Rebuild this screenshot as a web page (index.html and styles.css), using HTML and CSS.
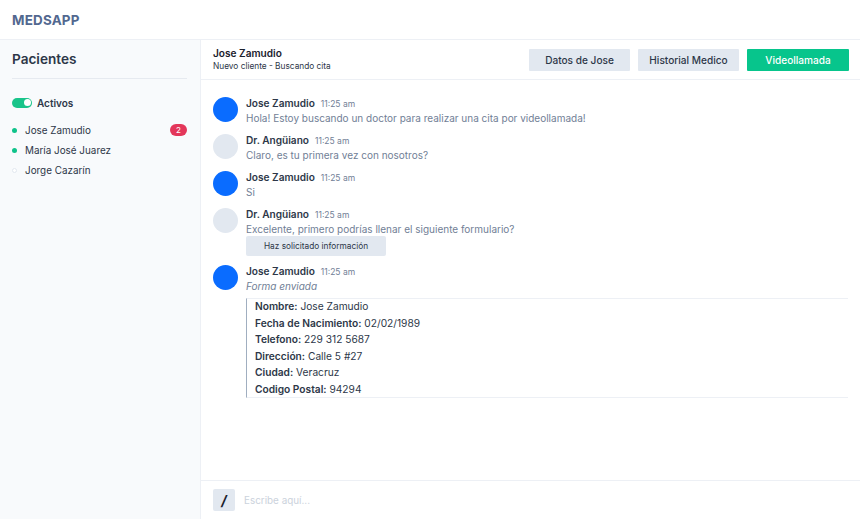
FILE: index.html
```html
<!DOCTYPE html>
<html lang="es">
<head>
<meta charset="utf-8">
<title>MedsApp</title>
<link rel="stylesheet" href="styles.css">
</head>
<body>
<div class="app">
  <header class="topbar"><div class="brand">MEDSAPP</div></header>
  <div class="main">
    <aside class="sidebar">
      <div class="side-title">Pacientes</div>
      <div class="side-body">
        <div class="toggle-row"><span class="toggle"><span class="knob"></span></span><span class="toggle-label">Activos</span></div>
        <ul class="patients">
          <li class="patient"><span class="dot on"></span><span class="pname">Jose Zamudio</span><span class="badge">2</span></li>
          <li class="patient"><span class="dot on"></span><span class="pname">María José Juarez</span></li>
          <li class="patient"><span class="dot off"></span><span class="pname">Jorge Cazarín</span></li>
        </ul>
      </div>
    </aside>
    <section class="chat">
      <div class="chat-head">
        <div class="who">
          <div class="who-name">Jose Zamudio</div>
          <div class="who-sub">Nuevo cliente - Buscando cita</div>
        </div>
        <div class="actions">
          <button class="btn">Datos de Jose</button>
          <button class="btn">Historial Medico</button>
          <button class="btn green">Videollamada</button>
        </div>
      </div>
      <div class="messages">
        <div class="msg">
          <div class="avatar blue"></div>
          <div class="msg-body">
            <div class="meta"><span class="author">Jose Zamudio</span><span class="time">11:25 am</span></div>
            <div class="text">Hola! Estoy buscando un doctor para realizar una cita por videollamada!</div>
          </div>
        </div>
        <div class="msg">
          <div class="avatar grey"></div>
          <div class="msg-body">
            <div class="meta"><span class="author">Dr. Angüiano</span><span class="time">11:25 am</span></div>
            <div class="text">Claro, es tu primera vez con nosotros?</div>
          </div>
        </div>
        <div class="msg">
          <div class="avatar blue"></div>
          <div class="msg-body">
            <div class="meta"><span class="author">Jose Zamudio</span><span class="time">11:25 am</span></div>
            <div class="text">Si</div>
          </div>
        </div>
        <div class="msg">
          <div class="avatar grey"></div>
          <div class="msg-body">
            <div class="meta"><span class="author">Dr. Angüiano</span><span class="time">11:25 am</span></div>
            <div class="text">Excelente, primero podrías llenar el siguiente formulario?</div>
            <div class="chip">Haz solicitado información</div>
          </div>
        </div>
        <div class="msg">
          <div class="avatar blue"></div>
          <div class="msg-body wide">
            <div class="meta"><span class="author">Jose Zamudio</span><span class="time">11:25 am</span></div>
            <div class="text italic">Forma enviada</div>
            <div class="form">
              <div class="frow"><b>Nombre:</b> Jose Zamudio</div>
              <div class="frow"><b>Fecha de Nacimiento:</b> 02/02/1989</div>
              <div class="frow"><b>Telefono:</b> 229 312 5687</div>
              <div class="frow"><b>Dirección:</b> Calle 5 #27</div>
              <div class="frow"><b>Ciudad:</b> Veracruz</div>
              <div class="frow"><b>Codigo Postal:</b> 94294</div>
            </div>
          </div>
        </div>
      </div>
      <div class="composer">
        <span class="slash">/</span>
        <span class="placeholder">Escribe aquí...</span>
      </div>
    </section>
  </div>
</div>
</body>
</html>
```
FILE: styles.css
```css
* { box-sizing: border-box; }
html, body { margin: 0; padding: 0; }
body {
  font-family: Inter, "Noto Sans", "Liberation Sans", sans-serif;
  color: #2d3748;
  background: #fff;
  width: 860px;
  height: 519px;
  overflow: hidden;
}
.app { display: flex; flex-direction: column; height: 519px; }
.topbar {
  height: 40px;
  border-bottom: 1px solid #edf0f5;
  display: flex;
  align-items: center;
  padding-left: 12px;
  flex: none;
}
.brand { font-weight: 700; font-size: 13.4px; color: #52688f; letter-spacing: 0.2px; }
.main { flex: 1; display: flex; min-height: 0; }
.sidebar {
  width: 201px;
  flex: none;
  background: #f8fafc;
  border-right: 1px solid #edf0f5;
  padding: 0 13px 0 12px;
}
.side-title {
  height: 39px;
  display: flex;
  align-items: center;
  font-size: 13.6px;
  font-weight: 600;
  color: #2d3748;
  border-bottom: 1px solid #e6eaf0;
}
.side-body { padding-top: 18px; }
.toggle-row { display: flex; align-items: center; gap: 5px; height: 11px; }
.toggle {
  width: 20px; height: 10px; border-radius: 5px;
  background: #19c48a; position: relative; display: inline-block;
}
.knob {
  position: absolute; right: 1.5px; top: 1.5px;
  width: 7px; height: 7px; border-radius: 50%; background: #fff;
}
.toggle-label { font-size: 10px; font-weight: 600; color: #2d3748; }
.patients { list-style: none; margin: 12px 0 0; padding: 0; }
.patient { display: flex; align-items: center; height: 20px; font-size: 9.9px; color: #2d3748; }
.dot { width: 5px; height: 5px; border-radius: 50%; margin-right: 8px; flex: none; }
.dot.on { background: #0fc28a; }
.dot.off { background: #fff; border: 1px solid #e2e8f0; }
.pname { flex: 1; }
.badge {
  background: #e3365a; color: #fff; font-size: 8px;
  width: 17px; height: 12px; border-radius: 6px;
  display: flex; align-items: center; justify-content: center;
}
.chat { flex: 1; display: flex; flex-direction: column; min-width: 0; }
.chat-head {
  height: 40px; flex: none;
  display: flex; align-items: center; justify-content: space-between;
  padding: 0 11px 0 12px;
  border-bottom: 1px solid #edf0f5;
}
.who-name { font-size: 10.1px; font-weight: 600; color: #1a202c; line-height: 13px; }
.who-sub { font-size: 8.3px; color: #2d3748; line-height: 12px; }
.actions { display: flex; gap: 8px; }
.btn {
  font-family: inherit;
  border: 0; border-radius: 1px;
  background: #e2e8f0; color: #2d3748;
  width: 101px; height: 22px;
  font-size: 10.1px; font-weight: 500;
  padding: 0;
}
.btn.green { background: #07c58c; color: #fff; width: 102px; }
.messages { flex: 1; padding: 17px 12px 0 12px; display: flex; flex-direction: column; gap: 9px; }
.msg { display: flex; gap: 8px; }
.avatar { width: 25px; height: 25px; border-radius: 50%; flex: none; }
.avatar.blue { background: #0a6cff; }
.avatar.grey { background: #e2e8f0; }
.msg-body.wide { flex: 1; }
.meta { display: flex; align-items: center; gap: 6px; height: 12px; line-height: 12px; }
.author { font-size: 10.1px; font-weight: 600; color: #2d3748; }
.time { font-size: 8.5px; color: #718096; padding-top: 1px; }
.text { font-size: 10px; color: #718096; line-height: 14px; height: 14px; margin-top: 2px; }
.text.italic { font-style: italic; }
.chip {
  width: 140px; height: 20px; border-radius: 2px;
  background: #e2e8f0; color: #2d3748;
  font-size: 8.3px; display: flex; align-items: center; justify-content: center;
}
.form {
  margin-top: 5px;
  border-left: 1px solid #a0aec0;
  border-top: 1px solid #edf0f5;
  border-bottom: 1px solid #edf0f5;
  padding: 1px 0 1px 8px;
  display: flex; flex-direction: column; gap: 3.6px;
}
.frow { font-size: 10.2px; color: #2d3748; line-height: 13px; }
.frow b { font-weight: 600; }
.composer {
  height: 39px; flex: none;
  border-top: 1px solid #edf0f5;
  display: flex; align-items: center; gap: 9px;
  padding: 0 12px;
}
.slash {
  width: 22px; height: 22px; border-radius: 2px;
  background: #e2e8f0; color: #1a202c;
  font-size: 14px; font-weight: 700; font-style: italic;
  display: flex; align-items: center; justify-content: center;
}
.placeholder { font-size: 9.9px; color: #cbd2dc; }
```
